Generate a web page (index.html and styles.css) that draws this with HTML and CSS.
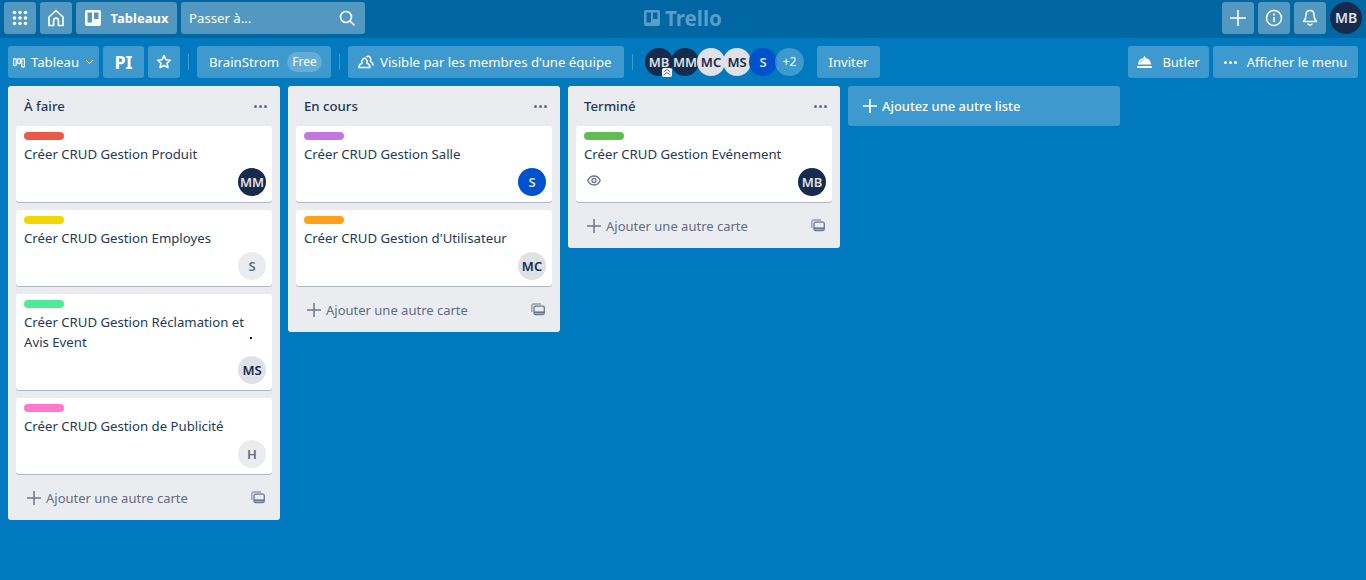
FILE: index.html
```html
<!DOCTYPE html>
<html lang="fr">
<head>
    <meta charset="UTF-8">
    <title>PI | Trello</title>
    <link rel="stylesheet" href="styles.css">
</head>
<body>

    <!-- Top bar -->
    <header class="topbar">
        <div class="topbar-group">
            <button class="top-btn square">
                <svg width="16" height="16" viewBox="0 0 16 16" fill="#fff">
                    <circle cx="2.5" cy="2.5" r="1.8"/><circle cx="8" cy="2.5" r="1.8"/><circle cx="13.5" cy="2.5" r="1.8"/>
                    <circle cx="2.5" cy="8" r="1.8"/><circle cx="8" cy="8" r="1.8"/><circle cx="13.5" cy="8" r="1.8"/>
                    <circle cx="2.5" cy="13.5" r="1.8"/><circle cx="8" cy="13.5" r="1.8"/><circle cx="13.5" cy="13.5" r="1.8"/>
                </svg>
            </button>
            <button class="top-btn square">
                <svg width="18" height="18" viewBox="0 0 18 18" fill="none" stroke="#fff" stroke-width="1.7" stroke-linejoin="round">
                    <path d="M9 1.500 2 8v8.500h4.600v-5a2.400 2.400 0 0 1 4.800 0v5H16V8z"/>
                </svg>
            </button>
            <button class="top-btn boards-btn">
                <svg width="16" height="16" viewBox="0 0 16 16">
                    <rect width="16" height="16" rx="2" fill="#fff"/>
                    <rect x="2.500" y="2.500" width="4.500" height="10" fill="#5496bf"/>
                    <rect x="9" y="2.500" width="4.500" height="6.500" fill="#5496bf"/>
                </svg>
                <span>Tableaux</span>
            </button>
            <div class="search-box">
                <span>Passer à...</span>
                <svg width="16" height="16" viewBox="0 0 16 16" fill="none" stroke="#fff" stroke-width="1.600" stroke-linecap="round">
                    <circle cx="7" cy="7" r="5.500"/><path d="m11 11 4 4"/>
                </svg>
            </div>
        </div>

        <div class="logo">
            <svg width="16" height="16" viewBox="0 0 16 16">
                <rect width="16" height="16" rx="2" fill="#5a9dc8"/>
                <rect x="2.500" y="2.500" width="4.500" height="10" fill="#0067a3"/>
                <rect x="9" y="2.500" width="4.500" height="6.500" fill="#0067a3"/>
            </svg>
            <span>Trello</span>
        </div>

        <div class="topbar-group">
            <button class="top-btn square">
                <svg width="16" height="16" viewBox="0 0 16 16" stroke="#fff" stroke-width="1.600"><path d="M8 0v16M0 8h16"/></svg>
            </button>
            <button class="top-btn square">
                <svg width="18" height="18" viewBox="0 0 18 18" fill="none" stroke="#fff" stroke-width="1.500">
                    <circle cx="9" cy="9" r="7.500"/><path d="M9 8v5" stroke-width="1.800"/><path d="M9 4.500v2" stroke-width="1.800"/>
                </svg>
            </button>
            <button class="top-btn square">
                <svg width="16" height="18" viewBox="0 0 16 18" fill="none" stroke="#fff" stroke-width="1.500" stroke-linejoin="round">
                    <path d="M8 1.500c-2.800 0-4 2-4 4.500 0 3.500-1 5-2.500 6.500h13C13 11 12 9.500 12 6c0-2.500-1.200-4.500-4-4.500z"/>
                    <path d="M6 15c.5 1.200 3.500 1.200 4 0" stroke-linecap="round"/>
                </svg>
            </button>
            <span class="avatar dark top-avatar">MB</span>
        </div>
    </header>

    <!-- Board -->
    <main class="board">
        <div class="board-header">
            <div class="board-group">
                <button class="board-btn view-btn">
                    <svg width="12" height="11" viewBox="0 0 12 11" fill="none" stroke="#fff" stroke-width="1.200">
                        <rect x=".6" y="1.600" width="2.600" height="7" rx=".8"/>
                        <rect x="4.700" y="1.600" width="2.600" height="5" rx=".8"/>
                        <rect x="8.800" y="1.600" width="2.600" height="8.500" rx=".8"/>
                    </svg>
                    <span>Tableau</span>
                    <svg width="9" height="6" viewBox="0 0 9 6" fill="none" stroke="#fff"><path d="m1 1 3.500 3.500L8 1"/></svg>
                </button>
                <button class="board-btn board-name">PI</button>
                <button class="board-btn star-btn">
                    <svg width="16" height="16" viewBox="0 0 16 16" fill="none" stroke="#fff" stroke-width="1.600" stroke-linejoin="round">
                        <path d="m8 1.700 1.900 4 4.400.5-3.200 3 .8 4.400L8 11.500l-3.900 2.100.8-4.400-3.200-3 4.400-.5z"/>
                    </svg>
                </button>
                <span class="divider"></span>
                <button class="board-btn team-btn">
                    <span>BrainStrom</span>
                    <span class="free-badge">Free</span>
                </button>
                <span class="divider"></span>
                <button class="board-btn visible-btn">
                    <svg width="16" height="14" viewBox="0 0 16 14" fill="none" stroke="#fff" stroke-width="1.500" stroke-linejoin="round">
                        <path d="M1 12.500c0-2.300 1-3.700 3-4.300C3.600 7.200 4 5 5 4c.8-.8 2.200-.8 3 0 .9.900 1.300 3 .9 4.200 2 .6 3 2 3.100 4.300z"/>
                        <path d="M8.500 2c1-1 2.700-.9 3.500.1.800 1 .9 3.100.4 4.300 1.600.7 2.600 2.300 2.600 4.100" />
                    </svg>
                    <span>Visible par les membres d'une équipe</span>
                </button>
                <span class="divider"></span>
                <div class="members">
                    <span class="avatar dark">MB
                        <svg class="admin-badge" width="10" height="9" viewBox="0 0 10 9" fill="none" stroke="#5a5fd0">
                            <rect width="10" height="9" rx="2" fill="#fff" stroke="none"/>
                            <path d="m1.500 4 3.500-2.500L8.500 4M1.500 7 5 4.500 8.500 7"/>
                        </svg>
                    </span>
                    <span class="avatar dark">MM</span>
                    <span class="avatar light">MC</span>
                    <span class="avatar light">MS</span>
                    <span class="avatar blue">S</span>
                    <span class="avatar more">+2</span>
                </div>
                <button class="board-btn invite-btn">Inviter</button>
            </div>
            <div class="board-group">
                <button class="board-btn butler-btn">
                    <svg width="15" height="13" viewBox="0 0 15 13" fill="#fff">
                        <circle cx="7.500" cy="1.200" r="1"/>
                        <path d="M1 8.500C1 4.800 3.800 2 7.500 2S14 4.800 14 8.500z"/>
                        <path d="M3.500 6.500C4 5 5 4 6.500 3.700" fill="none" stroke="#4397cc" stroke-width=".8"/>
                        <rect y="10" width="15" height="2" rx=".8"/>
                    </svg>
                    <span>Butler</span>
                </button>
                <button class="board-btn menu-btn">
                    <span class="dots white"><i></i><i></i><i></i></span>
                    <span>Afficher le menu</span>
                </button>
            </div>
        </div>

        <div class="lists">
            <section class="list">
                <div class="list-header">
                    <h2>À faire</h2>
                    <span class="dots"><i></i><i></i><i></i></span>
                </div>
                <article class="card">
                    <span class="label red"></span>
                    <p>Créer CRUD Gestion Produit</p>
                    <div class="card-foot"><span class="avatar dark">MM</span></div>
                </article>
                <article class="card">
                    <span class="label yellow"></span>
                    <p>Créer CRUD Gestion Employes</p>
                    <div class="card-foot"><span class="avatar pale">S</span></div>
                </article>
                <article class="card">
                    <span class="label mint"></span>
                    <p>Créer CRUD Gestion Réclamation et<br>Avis Event</p>
                    <span class="stray-dot"></span>
                    <div class="card-foot"><span class="avatar light">MS</span></div>
                </article>
                <article class="card">
                    <span class="label pink"></span>
                    <p>Créer CRUD Gestion de Publicité</p>
                    <div class="card-foot"><span class="avatar pale">H</span></div>
                </article>
                <div class="add-card">
                    <svg width="14" height="14" viewBox="0 0 14 14" stroke="#6b778c" stroke-width="1.500"><path d="M7 0v14M0 7h14"/></svg>
                    <span>Ajouter une autre carte</span>
                    <svg class="template-icon" width="14" height="14" viewBox="0 0 14 14" fill="none" stroke="#6b778c" stroke-width="1.300">
                        <path d="M.8 9V2.500Q.8 1 2.300 1H10" stroke-opacity=".7"/>
                        <rect x="3" y="3.200" width="10.300" height="8.300" rx="1.500"/>
                        <path d="M3 9.400h10.300" stroke-width="2"/>
                    </svg>
                </div>
            </section>

            <section class="list">
                <div class="list-header">
                    <h2>En cours</h2>
                    <span class="dots"><i></i><i></i><i></i></span>
                </div>
                <article class="card">
                    <span class="label purple"></span>
                    <p>Créer CRUD Gestion Salle</p>
                    <div class="card-foot"><span class="avatar blue">S</span></div>
                </article>
                <article class="card">
                    <span class="label orange"></span>
                    <p>Créer CRUD Gestion d'Utilisateur</p>
                    <div class="card-foot"><span class="avatar light">MC</span></div>
                </article>
                <div class="add-card">
                    <svg width="14" height="14" viewBox="0 0 14 14" stroke="#6b778c" stroke-width="1.500"><path d="M7 0v14M0 7h14"/></svg>
                    <span>Ajouter une autre carte</span>
                    <svg class="template-icon" width="14" height="14" viewBox="0 0 14 14" fill="none" stroke="#6b778c" stroke-width="1.300">
                        <path d="M.8 9V2.500Q.8 1 2.300 1H10" stroke-opacity=".7"/>
                        <rect x="3" y="3.200" width="10.300" height="8.300" rx="1.500"/>
                        <path d="M3 9.400h10.300" stroke-width="2"/>
                    </svg>
                </div>
            </section>

            <section class="list">
                <div class="list-header">
                    <h2>Terminé</h2>
                    <span class="dots"><i></i><i></i><i></i></span>
                </div>
                <article class="card">
                    <span class="label green"></span>
                    <p>Créer CRUD Gestion Evénement</p>
                    <div class="card-foot">
                        <svg class="eye-icon" width="14" height="11" viewBox="0 0 14 11" fill="none" stroke="#6b778c" stroke-width="1.300">
                            <path d="M.8 5.500C2 2.700 4.300 1 7 1s5 1.700 6.200 4.500C12 8.300 9.700 10 7 10S2 8.300.8 5.500z"/>
                            <circle cx="7" cy="5.500" r="2"/>
                        </svg>
                        <span class="avatar dark">MB</span>
                    </div>
                </article>
                <div class="add-card">
                    <svg width="14" height="14" viewBox="0 0 14 14" stroke="#6b778c" stroke-width="1.500"><path d="M7 0v14M0 7h14"/></svg>
                    <span>Ajouter une autre carte</span>
                    <svg class="template-icon" width="14" height="14" viewBox="0 0 14 14" fill="none" stroke="#6b778c" stroke-width="1.300">
                        <path d="M.8 9V2.500Q.8 1 2.300 1H10" stroke-opacity=".7"/>
                        <rect x="3" y="3.200" width="10.300" height="8.300" rx="1.500"/>
                        <path d="M3 9.400h10.300" stroke-width="2"/>
                    </svg>
                </div>
            </section>

            <button class="add-list">
                <svg width="14" height="14" viewBox="0 0 14 14" stroke="#fff" stroke-width="1.600"><path d="M7 0v14M0 7h14"/></svg>
                <span>Ajoutez une autre liste</span>
            </button>
        </div>
    </main>

</body>
</html>
```

FILE: styles.css
```css
/* Reset and base styles */
* {
    box-sizing: border-box;
    margin: 0;
    padding: 0;
}
html, body {
    height: 100%;
    overflow: hidden;
}
body {
    font-family: "Noto Sans", "Open Sans", sans-serif;
    font-size: 13.2px;
    line-height: 20px;
    color: #253858;
    background-color: #0079bf;
}
button {
    border: none;
    font: inherit;
    color: #fff;
    cursor: pointer;
}

/* Top bar */
.topbar {
    height: 38px;
    padding: 2px 4px 4px;
    background-color: #0067a3;
    display: flex;
    justify-content: space-between;
    align-items: center;
    position: relative;
}
.topbar-group {
    display: flex;
    align-items: center;
    gap: 4px;
}
.top-btn {
    height: 32px;
    border-radius: 3px;
    background-color: rgba(255, 255, 255, 0.32);
    display: flex;
    align-items: center;
    justify-content: center;
}
.top-btn.square {
    width: 32px;
}
.boards-btn {
    width: 101px;
    gap: 10px;
    font-weight: 700;
    font-size: 13px;
}
.search-box {
    width: 184px;
    height: 32px;
    border-radius: 3px;
    padding: 0 10px 0 8px;
    color: #fff;
    background-color: rgba(255, 255, 255, 0.32);
    display: flex;
    align-items: center;
    justify-content: space-between;
}
.logo {
    position: absolute;
    left: 644px;
    top: 8px;
    display: flex;
    align-items: center;
    gap: 5px;
    font-size: 20.5px;
    font-weight: 700;
    color: #5a9dc8;
}

/* Avatars */
.avatar {
    width: 28px;
    height: 28px;
    border-radius: 50%;
    display: flex;
    align-items: center;
    justify-content: center;
    font-weight: 600;
    font-size: 13px;
    flex-shrink: 0;
    position: relative;
}
.avatar.top-avatar {
    width: 32px;
    height: 32px;
    font-size: 14px;
}
.avatar.dark {
    background-color: #172b4d;
    color: #dfe1e6;
}
.avatar.light {
    background-color: #dfe1e6;
    color: #172b4d;
}
.avatar.pale {
    background-color: #ebecf0;
    color: #5e6c84;
}
.avatar.blue {
    background-color: #0052cc;
    color: #dfe1e6;
}
.avatar.more {
    background-color: rgba(255, 255, 255, 0.24);
    color: #fff;
    font-weight: 400;
    font-size: 12px;
}
.admin-badge {
    position: absolute;
    right: 1px;
    bottom: -1px;
}

/* Board header */
.board-header {
    padding: 8px;
    display: flex;
    justify-content: space-between;
    height: 48px;
}
.board-group {
    display: flex;
    align-items: center;
    gap: 4px;
}
.board-btn {
    height: 32px;
    border-radius: 3px;
    background-color: rgba(255, 255, 255, 0.24);
    display: flex;
    align-items: center;
    justify-content: center;
}
.view-btn {
    width: 91px;
    gap: 6px;
}
.board-name {
    width: 41px;
    font-size: 18px;
    font-weight: 700;
}
.star-btn {
    width: 32px;
}
.divider {
    width: 1px;
    height: 16px;
    margin: 0 4px;
    background-color: rgba(255, 255, 255, 0.24);
}
.team-btn {
    width: 134px;
    padding-left: 12px;
    justify-content: flex-start;
    gap: 8px;
}
.free-badge {
    height: 20px;
    padding: 0 5px;
    border-radius: 10px;
    font-size: 12px;
    background-color: rgba(255, 255, 255, 0.2);
}
.visible-btn {
    width: 276px;
    padding-left: 10px;
    justify-content: flex-start;
    gap: 6px;
}
.members {
    display: flex;
    margin: 0 8px 0 4px;
    width: 160px;
}
.members .avatar {
    margin-right: -2px;
}
.members .avatar.more {
    width: 29px;
}
.invite-btn {
    width: 63px;
    font-size: 13px;
}
.butler-btn {
    width: 81px;
    gap: 10px;
    font-size: 13px;
}
.menu-btn {
    width: 145px;
    gap: 10px;
    font-size: 13px;
}

/* Dots */
.dots {
    display: flex;
    gap: 2px;
}
.dots i {
    width: 3px;
    height: 3px;
    border-radius: 50%;
    background-color: #5e6c84;
}
.dots.white i {
    background-color: #fff;
}

/* Lists */
.lists {
    padding: 0 8px;
    display: flex;
    align-items: flex-start;
    gap: 8px;
}
.list {
    width: 272px;
    padding: 0 8px 6px;
    border-radius: 3px;
    background-color: #ebecf0;
}
.list-header {
    height: 40px;
    padding: 0 5px 0 8px;
    display: flex;
    align-items: center;
    justify-content: space-between;
}
.list-header h2 {
    font-size: 13.2px;
    font-weight: 500;
}
.card {
    position: relative;
    padding: 6px 8px;
    margin-bottom: 8px;
    border-radius: 3px;
    background-color: #fff;
    box-shadow: 0 1px 0 rgba(9, 30, 66, 0.25);
}
.card p {
    margin-top: 4px;
}
.label {
    display: block;
    width: 40px;
    height: 8px;
    border-radius: 4px;
}
.label.red { background-color: #eb5a46; }
.label.yellow { background-color: #f2d600; }
.label.mint { background-color: #51e898; }
.label.pink { background-color: #ff78cb; }
.label.purple { background-color: #c377e0; }
.label.orange { background-color: #ff9f1a; }
.label.green { background-color: #61bd4f; }
.card-foot {
    margin: 4px -2px 0 3px;
    display: flex;
    align-items: center;
    justify-content: flex-end;
}
.eye-icon {
    margin-right: auto;
    margin-top: -4px;
}
.stray-dot {
    position: absolute;
    left: 234px;
    top: 43px;
    width: 2px;
    height: 2px;
    background-color: #0000e0;
}
.add-card {
    height: 32px;
    padding: 0 7px 0 11px;
    font-size: 13px;
    color: #5e6c84;
    display: flex;
    align-items: center;
    gap: 5px;
}
.template-icon {
    margin-left: auto;
}
.add-list {
    width: 272px;
    height: 40px;
    padding: 0 15px;
    border-radius: 3px;
    background-color: rgba(255, 255, 255, 0.24);
    display: flex;
    align-items: center;
    gap: 5px;
    font-size: 12.9px;
    font-weight: 500;
}
```
